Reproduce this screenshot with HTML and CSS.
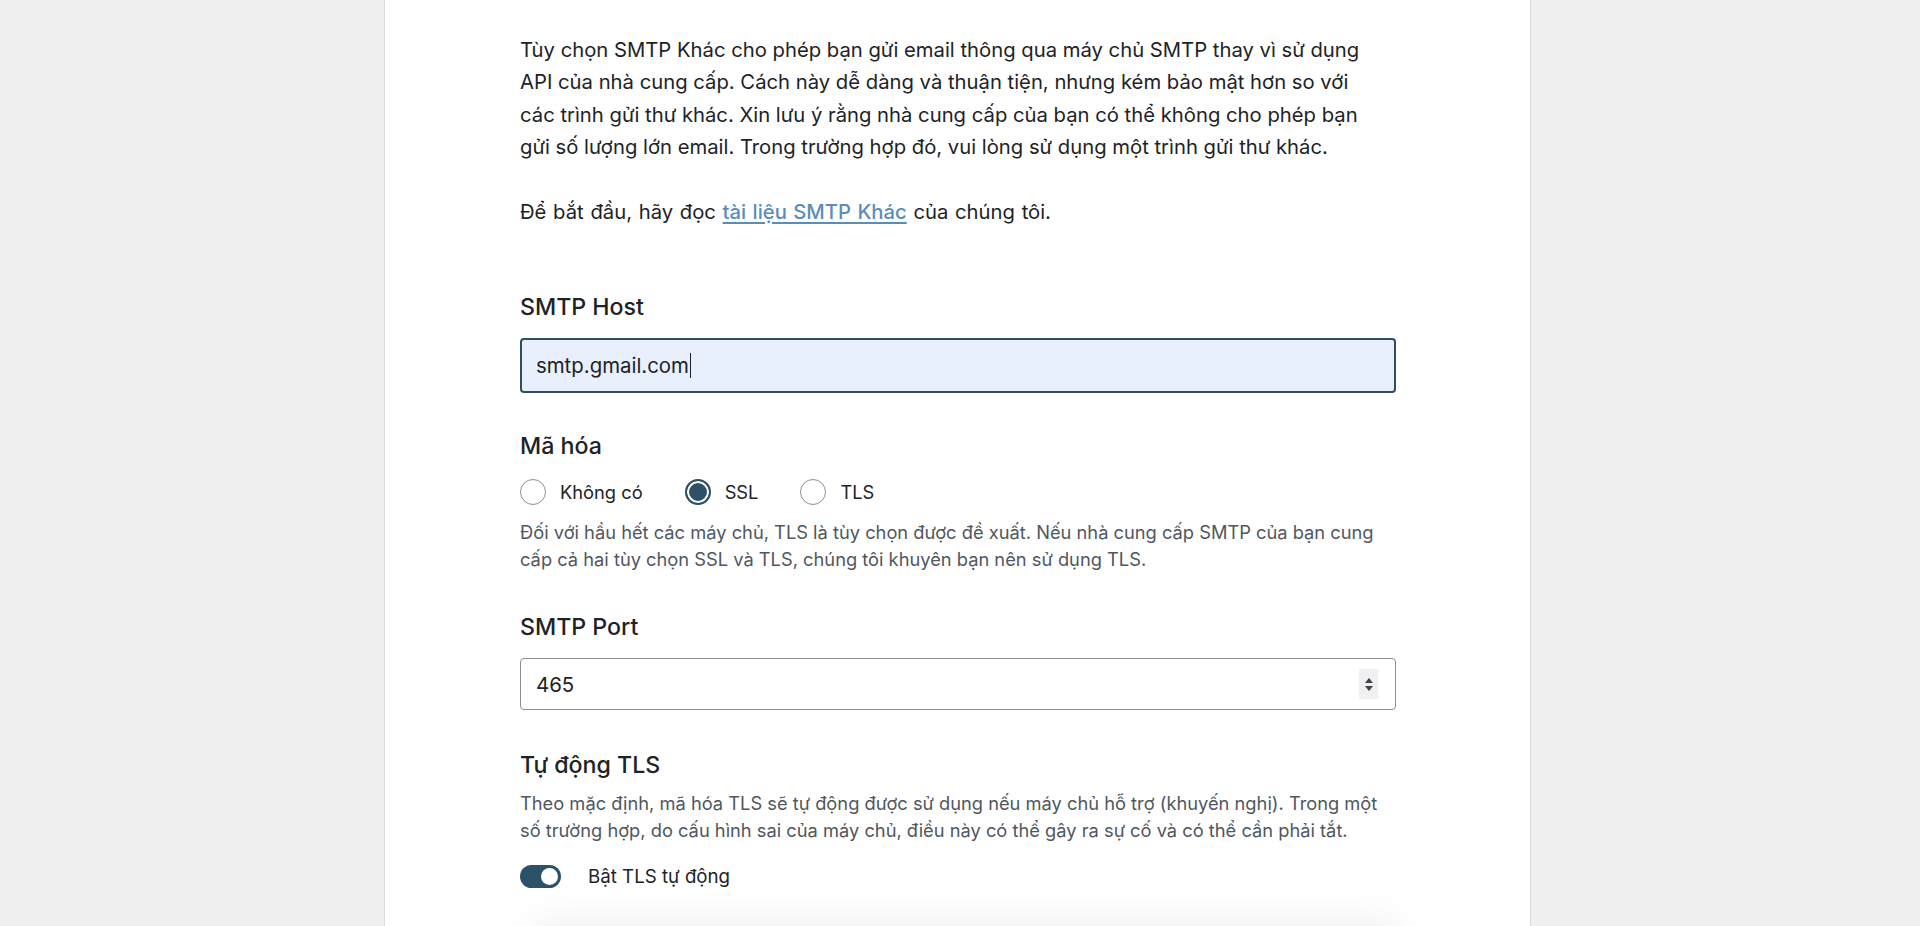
FILE: index.html
```html
<!DOCTYPE html>
<html lang="vi">
<head>
<meta charset="utf-8">
<title>SMTP Khác</title>
<link rel="stylesheet" href="styles.css">
</head>
<body>
<div class="page">
  <main class="panel">
    <p class="intro">Tùy chọn SMTP Khác cho phép bạn gửi email thông qua máy chủ SMTP thay vì sử dụng<br>API của nhà cung cấp. Cách này dễ dàng và thuận tiện, nhưng kém bảo mật hơn so với<br>các trình gửi thư khác. Xin lưu ý rằng nhà cung cấp của bạn có thể không cho phép bạn<br>gửi số lượng lớn email. Trong trường hợp đó, vui lòng sử dụng một trình gửi thư khác.</p>
    <p class="intro start">Để bắt đầu, hãy đọc <a href="#" class="link">tài liệu SMTP Khác</a> của chúng tôi.</p>

    <section class="field field-host">
      <label class="label">SMTP Host</label>
      <div class="input input-focus"><span>smtp.gmail.com</span><span class="caret"></span></div>
    </section>

    <section class="field field-enc">
      <div class="label">Mã hóa</div>
      <div class="radios">
        <span class="radio-item"><span class="radio"></span>Không có</span>
        <span class="radio-item"><span class="radio checked"></span>SSL</span>
        <span class="radio-item"><span class="radio"></span>TLS</span>
      </div>
      <p class="help help-enc">Đối với hầu hết các máy chủ, TLS là tùy chọn được đề xuất. Nếu nhà cung cấp SMTP của bạn cung<br>cấp cả hai tùy chọn SSL và TLS, chúng tôi khuyên bạn nên sử dụng TLS.</p>
    </section>

    <section class="field field-port">
      <label class="label">SMTP Port</label>
      <div class="input input-port"><span>465</span>
        <span class="spinner">
          <svg width="12" height="18" viewBox="0 0 12 18"><path d="M6 3 L10 8 L2 8 Z" fill="#3c434a"/><path d="M2 11 L10 11 L6 16 Z" fill="#3c434a"/></svg>
        </span>
      </div>
    </section>

    <section class="field field-tls">
      <div class="label">Tự động TLS</div>
      <p class="help help-tls">Theo mặc định, mã hóa TLS sẽ tự động được sử dụng nếu máy chủ hỗ trợ (khuyến nghị). Trong một<br>số trường hợp, do cấu hình sai của máy chủ, điều này có thể gây ra sự cố và có thể cần phải tắt.</p>
      <div class="toggle-row"><span class="toggle"><span class="knob"></span></span><span>Bật TLS tự động</span></div>
    </section>
    <div class="fade"></div>
  </main>
</div>
</body>
</html>
```
FILE: styles.css
```css
html, body {
  margin: 0;
  padding: 0;
  height: 926px;
  overflow: hidden;
  background: #f0f0f1;
  font-family: Inter, "Noto Sans", "Liberation Sans", sans-serif;
  color: #1d2327;
}
.page {
  display: flex;
  height: 926px;
}
.panel {
  position: relative;
  margin-left: 384px;
  width: 1147px;
  height: 926px;
  background: #fff;
  border-left: 1px solid #dcdcde;
  border-right: 1px solid #dcdcde;
  padding: 34px 0 0 135px;
  box-sizing: border-box;
  overflow: hidden;
}
.intro {
  width: 876px;
  margin: 0;
  font-size: 20.25px;
  line-height: 32.4px;
  color: #1d2327;
  white-space: nowrap;
}
.start {
  margin-top: 32px;
  word-spacing: 1px;
}
.link {
  color: #5b8dbb;
  font-weight: 500;
  text-decoration: underline;
  text-underline-offset: 3px;
}
.field {
  width: 876px;
}
.label {
  display: block;
  font-size: 23.2px;
  line-height: 30px;
  font-weight: 500;
  color: #1d2327;
}
.field-host { margin-top: 64px; }
.field-enc { margin-top: 38px; }
.field-port { margin-top: 39px; }
.field-tls { margin-top: 40px; }
.input {
  display: flex;
  align-items: center;
  margin-top: 16px;
  box-sizing: border-box;
  border-radius: 4px;
  font-size: 20.4px;
  padding: 0 15px;
}
.input-focus {
  height: 55px;
  background: #e8f0fe;
  border: 2px solid #2f4f5f;
  padding-left: 14px;
}
.caret {
  display: inline-block;
  width: 1.5px;
  height: 25px;
  background: #1d2327;
  margin-left: 1px;
}
.input-port {
  height: 52px;
  border: 1px solid #8c8f94;
  justify-content: space-between;
  margin-top: 16px;
}
.spinner {
  display: flex;
  align-items: center;
  justify-content: center;
  width: 19px;
  height: 30px;
  background: #f0f0f0;
  margin-right: 2px;
}
.radios {
  display: flex;
  align-items: center;
  height: 30px;
  margin-top: 16px;
  font-size: 18.3px;
}
.radio-item {
  display: flex;
  align-items: center;
  margin-right: 42px;
}
.radio {
  width: 26px;
  height: 26px;
  box-sizing: border-box;
  border: 1.5px solid #8c8f94;
  border-radius: 50%;
  margin-right: 14px;
  background: #fff;
}
.radio.checked {
  border: 2px solid #2f4f5f;
  background: #2b5268;
  box-shadow: inset 0 0 0 2px #fff;
}
.help {
  margin: 0;
  font-size: 18.3px;
  line-height: 27px;
  color: #50575e;
  white-space: nowrap;
}
.help-enc { margin-top: 12px; }
.help-tls { margin-top: 10px; }
.toggle-row {
  display: flex;
  align-items: center;
  margin-top: 20px;
  font-size: 18.7px;
  height: 24px;
}
.toggle {
  position: relative;
  width: 41px;
  height: 23px;
  border-radius: 12px;
  background: #2b5268;
  margin-right: 27px;
}
.knob {
  position: absolute;
  right: 3px;
  top: 3px;
  width: 17px;
  height: 17px;
  border-radius: 50%;
  background: #fff;
}
.fade {
  position: absolute;
  left: 150px;
  width: 860px;
  bottom: -60px;
  height: 60px;
  background: #fff;
  box-shadow: 0 -4px 40px rgba(0,0,0,0.07);
}
```
